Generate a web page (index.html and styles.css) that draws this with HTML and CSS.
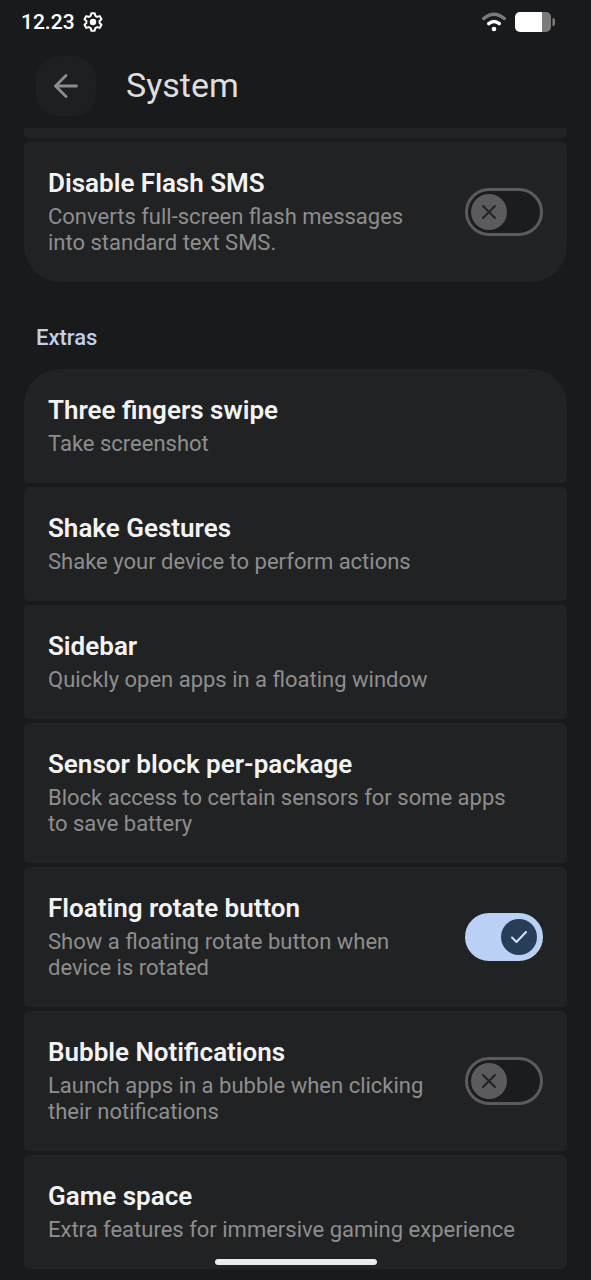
FILE: index.html
```html
<!DOCTYPE html>
<html lang="en">
<head>
<meta charset="utf-8">
<meta name="viewport" content="width=device-width, initial-scale=1">
<title>System</title>
<link rel="stylesheet" href="styles.css">
</head>
<body>
<div class="status-bar">
  <span class="clock">12.23</span>
  <svg class="gear" viewBox="0 0 20 20" aria-hidden="true">
    <path d="M8.300 1.200H11.700L12.300 3.800L14.200 4.900L16.700 4.100L18.500 7.200L16.600 8.900V11.100L18.500 12.800L16.700 15.900L14.200 15.100L12.300 16.200L11.700 18.800H8.300L7.700 16.200L5.800 15.100L3.300 15.900L1.500 12.800L3.400 11.100V8.900L1.500 7.200L3.300 4.100L5.800 4.900L7.700 3.800Z" fill="none" stroke="currentColor" stroke-width="2" stroke-linejoin="round"/>
    <circle cx="10" cy="10" r="3.200" fill="currentColor"/>
  </svg>
  <svg class="wifi" viewBox="0 0 24 20" aria-hidden="true">
    <path d="M1.700 6.500Q12-2 22.300 6.500" fill="none" stroke="#7b7b7c" stroke-width="3.400" stroke-linecap="round"/>
    <path d="M6.700 11.600Q12 7.400 17.300 11.600" fill="none" stroke="currentColor" stroke-width="3.400" stroke-linecap="round"/>
    <circle cx="12" cy="17" r="2.300" fill="currentColor"/>
  </svg>
  <svg class="battery" viewBox="0 0 40 20" aria-hidden="true">
    <path d="M27 0H31A5 5 0 0 1 36 5V15A5 5 0 0 1 31 20H27Z" fill="#7b7b7c"/>
    <path d="M5 0H27V20H5A5 5 0 0 1 0 15V5A5 5 0 0 1 5 0Z" fill="currentColor"/>
    <path d="M37.500 6H38A2 2 0 0 1 40 8V12A2 2 0 0 1 38 14H37.500Z" fill="#7b7b7c"/>
  </svg>
</div>
<header class="app-bar">
  <button class="back" type="button" aria-label="Back">
    <svg viewBox="0 0 24 24" aria-hidden="true"><path d="M12 1.500L1.500 12L12 22.500M1.500 12H22.500" fill="none" stroke="currentColor" stroke-width="2.800" stroke-linecap="round" stroke-linejoin="round"/></svg>
  </button>
  <h1 class="page-title">System</h1>
</header>
<main class="content">
  <section class="group group-end">
    <div class="card card-cut"></div>
    <label class="card">
      <span class="text"><span class="name">Disable Flash SMS</span><span class="desc">Converts full-screen flash messages into standard text SMS.</span></span>
      <span class="switch"><input type="checkbox" role="switch"><svg class="mark" viewBox="0 0 36 36" aria-hidden="true"><path d="M12 12L24 24M24 12L12 24"/></svg></span>
    </label>
  </section>
  <h2 class="section-title">Extras</h2>
  <section class="group group-start">
    <a class="card" href="#swipe"><span class="text"><span class="name">Three fingers swipe</span><span class="desc">Take screenshot</span></span></a>
    <a class="card" href="#shake"><span class="text"><span class="name">Shake Gestures</span><span class="desc">Shake your device to perform actions</span></span></a>
    <a class="card" href="#sidebar"><span class="text"><span class="name">Sidebar</span><span class="desc">Quickly open apps in a floating window</span></span></a>
    <a class="card" href="#sensor"><span class="text"><span class="name">Sensor block per-package</span><span class="desc">Block access to certain sensors for some apps to save battery</span></span></a>
    <label class="card">
      <span class="text"><span class="name">Floating rotate button</span><span class="desc">Show a floating rotate button when device is rotated</span></span>
      <span class="switch"><input type="checkbox" role="switch" checked><svg class="mark" viewBox="0 0 36 36" aria-hidden="true"><path d="M11 18.500L15.500 23L25 13"/></svg></span>
    </label>
    <label class="card">
      <span class="text"><span class="name">Bubble Notifications</span><span class="desc">Launch apps in a bubble when clicking their notifications</span></span>
      <span class="switch"><input type="checkbox" role="switch"><svg class="mark" viewBox="0 0 36 36" aria-hidden="true"><path d="M12 12L24 24M24 12L12 24"/></svg></span>
    </label>
    <a class="card" href="#game"><span class="text"><span class="name">Game space</span><span class="desc">Extra features for immersive gaming experience</span></span></a>
  </section>
</main>
<div class="home-indicator"></div>
</body>
</html>
```
FILE: styles.css
```css
* { box-sizing: border-box; }
body {
  margin: 0;
  background: #191a1b;
  color: #f3f3f4;
  font-family: Roboto, "Noto Sans", sans-serif;
}
.status-bar {
  display: flex;
  align-items: center;
  height: 44px;
  padding: 0 36px 0 21px;
  color: #fff;
}
.clock { font-size: 21px; line-height: 28px; font-weight: 500; }
.gear { width: 20px; height: 20px; margin-left: 8px; }
.wifi { width: 24px; height: 20px; margin-left: auto; }
.battery { width: 40px; height: 20px; margin-left: 9px; }
.app-bar {
  display: flex;
  align-items: center;
  gap: 30px;
  height: 84px;
  padding: 0 36px;
}
.back {
  display: grid;
  place-items: center;
  width: 60px;
  height: 60px;
  padding: 0;
  border: 0;
  border-radius: 22px;
  background: #1e1f20;
  color: #8d8d8e;
}
.back svg { width: 24px; height: 24px; }
.page-title {
  margin: 0;
  padding-bottom: 2px;
  font-size: 34px;
  line-height: 44px;
  font-weight: 400;
  color: #dededf;
}
.content { padding: 0 24px 11px; }
.group { display: grid; gap: 4px; }
.card {
  display: flex;
  align-items: center;
  gap: 24px;
  padding: 24px 24px 26px;
  border-radius: 5px;
  background: #212223;
  color: inherit;
  text-decoration: none;
}
a.card { padding-right: 48px; }
.card-cut { height: 10px; padding: 0; border-radius: 0 0 5px 5px; }
.group-end .card:last-child { border-radius: 5px 5px 36px 36px; }
.group-start .card:first-child { border-radius: 36px 36px 5px 5px; }
.text { display: grid; gap: 4px; flex: 1; }
.name { font-size: 26px; line-height: 34px; font-weight: 600; }
.desc { font-size: 22px; line-height: 26px; color: #8e8e8f; }
.section-title {
  margin: 42px 12px 17px;
  font-size: 22px;
  line-height: 28px;
  font-weight: 500;
  color: #bed0ea;
}
.switch { position: relative; width: 78px; height: 48px; margin-top: 2px; }
.switch input {
  appearance: none;
  width: 78px;
  height: 48px;
  margin: 0;
  border: 3px solid #5b5b5d;
  border-radius: 24px;
  background: #1b1c1d;
}
.switch input:checked { border-color: #bad0f4; background: #bad0f4; }
.mark {
  position: absolute;
  top: 6px;
  left: 6px;
  width: 36px;
  height: 36px;
  border-radius: 50%;
  background: #5b5b5d;
  fill: none;
  stroke: #212223;
  stroke-width: 2;
  stroke-linecap: round;
  stroke-linejoin: round;
}
.switch input:checked + .mark {
  left: 36px;
  background: #283d57;
  stroke: #d3e3fb;
}
.home-indicator {
  position: fixed;
  bottom: 15px;
  left: 50%;
  width: 162px;
  height: 6px;
  margin-left: -81px;
  border-radius: 3px;
  background: #ececed;
}
```
